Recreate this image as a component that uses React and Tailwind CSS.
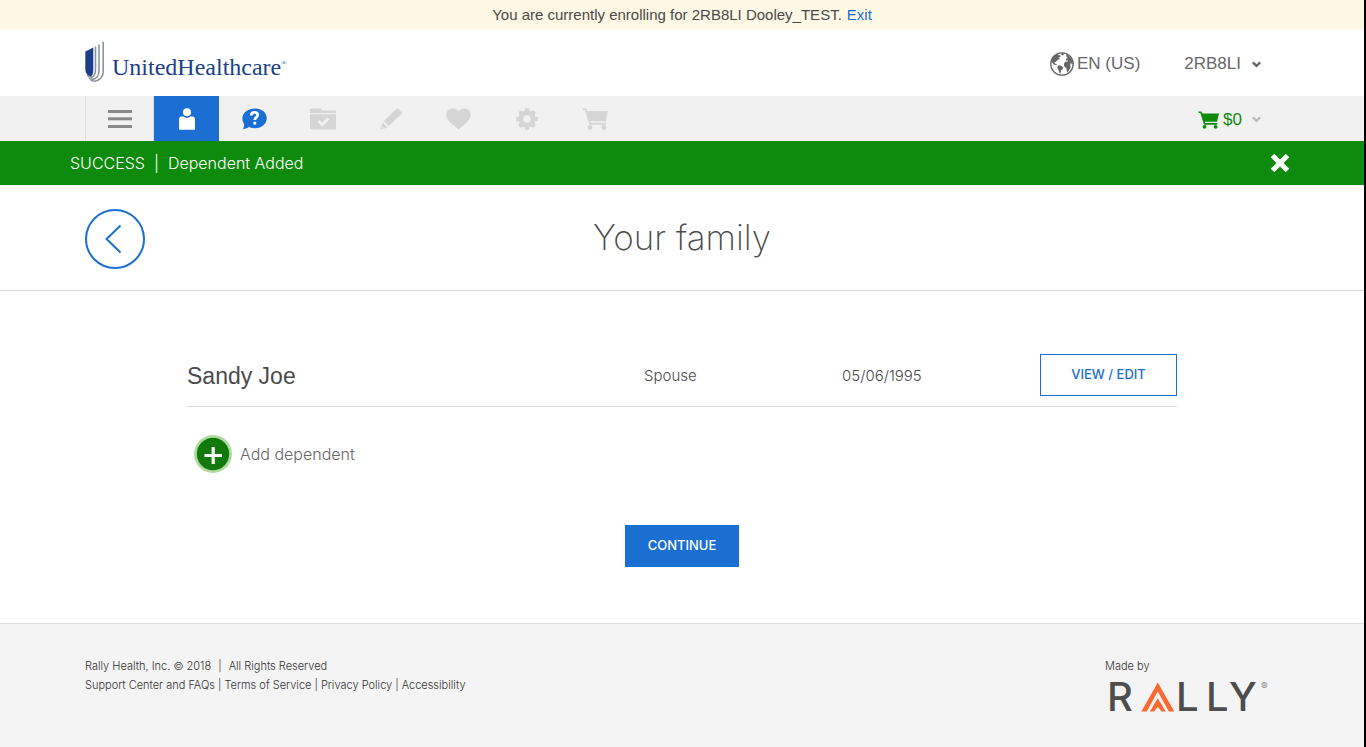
import React from "react";

const light = "font-[Inter,'Liberation_Sans',sans-serif] font-light";

function Bars() {
  return (
    <svg width="24" height="20" viewBox="0 0 24 20" fill="currentColor" aria-hidden="true">
      <rect y="1" width="24" height="3" />
      <rect y="8.3" width="24" height="3" />
      <rect y="16" width="24" height="3" />
    </svg>
  );
}

function Person() {
  return (
    <svg width="16" height="22" viewBox="0 0 16 22" fill="currentColor" aria-hidden="true">
      <circle cx="8" cy="4.2" r="4" />
      <path d="M3 8.500h1.500a5.600 5.600 0 0 0 7 0H13a3 3 0 0 1 3 3V21a.7.7 0 0 1-.7.7H.7A.7.7 0 0 1 0 21v-9.500a3 3 0 0 1 3-3z" />
    </svg>
  );
}

function Help() {
  return (
    <svg width="25" height="22" viewBox="0 0 25 22" aria-hidden="true">
      <path d="M13 .5C20 .5 24.700 4.800 24.700 10.300S20 20.300 13 20.300c-2.300 0-4.300-.4-6-1.200-1.300.9-3.300 1.700-6 2.200.8-1.500 1.200-3.200 1.200-5C1 14.600.4 12.600.4 10.300.4 4.800 6 .5 13 .5z" fill="currentColor" />
      <path d="M9.300 7.500c0-2 1.300-3.100 3.200-3.100s3.200 1 3.200 2.700c0 2.300-2.900 2.300-2.900 4.900" fill="none" stroke="#fff" strokeWidth="2.700" />
      <rect x="11.400" y="13.800" width="2.800" height="2.700" fill="#fff" />
    </svg>
  );
}

function Folder() {
  return (
    <svg width="26" height="22" viewBox="0 0 26 22" aria-hidden="true">
      <path d="M1 .5h9.500l2 2H25a1 1 0 0 1 1 1V5H0V1.500a1 1 0 0 1 1-1zM0 6.200h26v14.300a1 1 0 0 1-1 1H1a1 1 0 0 1-1-1z" fill="currentColor" />
      <path d="M8.600 13l3.700 3.700 6-6.200" fill="none" stroke="#f1f1f1" strokeWidth="3" />
    </svg>
  );
}

function Pencil() {
  return (
    <svg width="22" height="22" viewBox="0 0 22 22" fill="currentColor" aria-hidden="true">
      <path d="M17.700.5l4.100 4.100a.6.6 0 0 1 0 .8L8.700 18.300l-5-5L16.800.5a.6.6 0 0 1 .9 0zM2.600 14.500l4.900 4.900L.3 21.700z" />
      <circle cx="2.400" cy="19.700" r=".8" fill="#f1f1f1" />
    </svg>
  );
}

function Heart() {
  return (
    <svg width="25" height="22" viewBox="0 0 25 22" fill="currentColor" aria-hidden="true">
      <path d="M12.500 21.500C9.500 18 .3 13.500.3 7 .3 3 3.200.4 6.700.4c2.500 0 4.800 1.300 5.800 3.100C13.500 1.700 15.800.4 18.300.4c3.500 0 6.400 2.600 6.400 6.600 0 6.500-9.200 11-12.200 14.500z" />
    </svg>
  );
}

function Gear() {
  return (
    <svg width="22" height="22" viewBox="0 0 22 22" aria-hidden="true">
      <g fill="currentColor">
        <circle cx="11" cy="11" r="8.500" />
        {[0, 45, 90, 135].map((a) => (
          <rect key={a} x="8.800" y=".3" width="4.400" height="21.400" rx="1" transform={`rotate(${a} 11 11)`} />
        ))}
      </g>
      <circle cx="11" cy="11" r="3.800" fill="#f1f1f1" />
    </svg>
  );
}

function Cart({ className }) {
  return (
    <svg className={className} viewBox="0 0 26 22" fill="currentColor" aria-hidden="true">
      <path d="M0 .5h4.300l1.100 2.500H26l-2.400 10.300H8.500l.5 1.500h14.800v2H7.500L2.900 2.300H1z" />
      <circle cx="8" cy="19.500" r="2.400" />
      <circle cx="21.800" cy="19.500" r="2.400" />
    </svg>
  );
}

function Caret() {
  return (
    <svg width="9" height="7" viewBox="0 0 9 7" fill="none" stroke="currentColor" strokeWidth="2.400" aria-hidden="true">
      <path d="M.8 1.300l3.700 3.500 3.700-3.500" />
    </svg>
  );
}

function Globe() {
  return (
    <svg width="24" height="24" viewBox="0 0 24 24" aria-hidden="true">
      <circle cx="12" cy="12" r="11.200" fill="none" stroke="currentColor" strokeWidth="1.300" />
      <path
        fill="currentColor"
        d="M1.500 8.500C2.600 5.400 4.600 3.300 7.500 2l1.500 1.200 1.700.3-.4 1.500-1.700.5 1.200 1.500-2.200.8-1.400 2-1.700.2.600 1.800 2 .8-.3.700-3-.8L1.800 9.900zM8 13.600l2-.3 3.300 2-.7 2-1.500 1-.5 2.700-1 .4-1-3.200-1.400-2.600zM10.500 1.800l3-.6.5 1.400-1.800 1zM15.800 4l1-1.500C20 4.300 22.500 7.500 23 11.400l-1.100 1.200-1.100-2-.6 2.500.4 2-1.900 3.900-1.500 1.200-1-4.200-2-1.500-.3-2.800 1.500-2 2.500-.3-.2-1.100-2.100.3.800-2 1.500-.7z"
      />
    </svg>
  );
}

function Shield() {
  return (
    <svg width="20" height="41" viewBox="0 0 20 41" aria-hidden="true">
      <path d="M.3 10.500L8.300 6.500V29c0 3.500-1 5.800-2.600 6.700C2 34.500.3 31.500.3 27.500z" fill="#1b3f8b" />
      <g fill="none" stroke="#8b949e" strokeWidth="1.600">
        <path d="M10.500 5.500V29c0 4-1.800 6.700-4.300 7.300-1.300 0-2.800-.8-3.800-2" />
        <path d="M14 3.500V30c0 4.700-2.800 7.900-6.300 8.400-1.200 0-2.700-.5-3.700-1.600" />
        <path d="M18.200.8V30.500c0 5.600-3.700 9.300-8.700 9.700-1.600 0-3-.5-4-1.300" />
      </g>
    </svg>
  );
}

function Rally() {
  return (
    <svg width="166" height="50" viewBox="-4 -8 166 50" role="img" aria-label="Rally">
      <g fill="#4d4d4d" className="font-[Inter,sans-serif] text-[40px] font-medium">
        <text x="-2" y="31">R</text>
        <text x="67" y="31">L</text>
        <text x="97" y="31">L</text>
        <text x="120" y="31">Y</text>
      </g>
      <g fill="#f96a32">
        <path d="M48.800 2.500L65.300 31.500h-5.500L48.800 11.500 37.800 31.500h-5.500z" />
        <path d="M48.800 18.300L56.800 31.500h-4.300l-3.700-4.500-3.700 4.500h-4.300z" />
      </g>
      <text x="152" y="10" fill="#8a8a8a" className="font-[Inter,sans-serif] text-[10px] font-normal">®</text>
    </svg>
  );
}

const steps = [
  { label: "Help", icon: <Help />, tone: "text-[#1b6fd3]" },
  { label: "Benefits", icon: <Folder />, tone: "text-[#d5d5d5]" },
  { label: "Edit", icon: <Pencil />, tone: "text-[#d5d5d5]" },
  { label: "Favorites", icon: <Heart />, tone: "text-[#d5d5d5]" },
  { label: "Settings", icon: <Gear />, tone: "text-[#d5d5d5]" },
  { label: "Checkout", icon: <Cart className="h-[22px] w-[26px]" />, tone: "text-[#d5d5d5]" },
];

const dependents = [{ name: "Sandy Joe", relation: "Spouse", born: "05/06/1995" }];

const shell = "mx-auto w-full max-w-[1224px] px-[15px]";

export default function App() {
  return (
    <div className="flex min-h-screen flex-col border-r-2 border-black bg-white font-['Liberation_Sans',Arial,sans-serif] text-[#4a4a4a]">
      <div className="flex h-[30px] items-center justify-center gap-[5px] bg-[#fdf7e3] text-[15px]">
        <span>You are currently enrolling for 2RB8LI Dooley_TEST.</span>
        <a href="#exit" className="text-[#1b6fd3]">Exit</a>
      </div>

      <header className={`${shell} flex h-[66px] items-center justify-between`}>
        <a href="#home" className="flex items-center gap-[7px] pb-1 font-['Liberation_Serif',serif] text-[24px] text-[#1b3f8b]">
          <Shield />
          <span className="flex items-start pt-3 leading-7">
            UnitedHealthcare<span className="text-[7px] leading-5">®</span>
          </span>
        </a>
        <div className="flex items-center gap-11 pt-[2px] pr-[18px] text-[17px] text-[#666]">
          <button type="button" className="flex items-center gap-[3px]">
            <Globe />
            EN (US)
          </button>
          <button type="button" className="flex items-center gap-[11px]">
            2RB8LI
            <Caret />
          </button>
        </div>
      </header>

      <div className="bg-[#f1f1f1]">
        <div className={`${shell} flex h-[45px] justify-between`}>
          <nav className="flex gap-[3px]">
            <div className="-mr-[3px] flex border-x border-[#ddd]">
              <button type="button" aria-label="Menu" className="flex w-[67px] items-center justify-center text-[#888]">
                <Bars />
              </button>
            </div>
            <button type="button" aria-label="Profile" className="flex w-[65px] items-center justify-center bg-[#1b6fd3] text-white">
              <Person />
            </button>
            {steps.map((s) => (
              <button key={s.label} type="button" aria-label={s.label} className={`flex w-[65px] items-center justify-center ${s.tone}`}>
                {s.icon}
              </button>
            ))}
          </nav>
          <button type="button" className="flex items-center gap-1 pt-[2px] pr-[18px] text-[17px] text-[#108a0c]">
            <Cart className="h-[18px] w-[21px]" />
            $0
            <span className="pl-[6px] text-[#bbb]">
              <Caret />
            </span>
          </button>
        </div>
      </div>

      <div role="status" className="bg-[#0e8a0c] text-white">
        <div className={`mx-auto flex h-11 w-full max-w-[1224px] items-center justify-between pr-1 text-[16px] ${light}`}>
          <p>SUCCESS&nbsp; |&nbsp; Dependent Added</p>
          <button type="button" aria-label="Close">
            <svg width="20" height="20" viewBox="0 0 20 20" stroke="currentColor" strokeWidth="5" fill="none" aria-hidden="true">
              <path d="M2.500 2.500l15 15M17.500 2.500l-15 15" />
            </svg>
          </button>
        </div>
      </div>

      <div className="border-b border-[#d5d5d5]">
        <div className={`${shell} grid h-[105px] grid-cols-[60px_1fr_60px] items-center`}>
          <button type="button" aria-label="Back" className="mt-[2px] flex size-[60px] items-center justify-center rounded-full border-2 border-[#1b6fd3] text-[#1b6fd3]">
            <svg width="20" height="30" viewBox="0 0 20 30" fill="none" stroke="currentColor" strokeWidth="2" aria-hidden="true">
              <path d="M15.500 1.500L1.500 15l14 13.500" />
            </svg>
          </button>
          <h1 className="text-center font-[Inter,sans-serif] text-[35px] font-extralight">Your family</h1>
        </div>
      </div>

      <main className="mx-auto w-full max-w-[990px] pt-[53px] pb-14">
        <table aria-label="Dependents" className="w-full border-collapse text-left">
          <tbody>
            {dependents.map((d) => (
              <tr key={d.name} className="h-[62px] border-b border-[#ddd]">
                <th scope="row" className="pt-[3px] text-[23px] font-normal">{d.name}</th>
                <td className={`w-[198px] pt-[3px] text-[15px] ${light}`}>{d.relation}</td>
                <td className={`w-[198px] pt-[3px] text-[15px] ${light}`}>{d.born}</td>
                <td className="w-[137px]">
                  <button type="button" className="h-[42px] w-full border border-[#1b6fd3] font-[Inter,sans-serif] text-[13px] font-medium text-[#1b6fd3]">
                    VIEW / EDIT
                  </button>
                </td>
              </tr>
            ))}
          </tbody>
        </table>
        <button type="button" className={`mt-7 ml-[7px] flex items-center gap-2 text-[16px] text-[#666] ${light}`}>
          <svg width="38" height="38" viewBox="0 0 38 38" aria-hidden="true">
            <circle cx="19" cy="19" r="19" fill="#b0dba0" />
            <circle cx="19" cy="19" r="16.200" fill="#127a0c" />
            <path d="M10.500 20.500H28M19.200 12V29" stroke="#fff" strokeWidth="3.200" />
          </svg>
          Add dependent
        </button>
        <button type="button" className="mx-auto mt-[52px] block h-[42px] w-[114px] bg-[#1b6fd3] font-[Inter,sans-serif] text-[13px] font-medium text-white">
          CONTINUE
        </button>
      </main>

      <footer className="grow border-t border-[#ddd] bg-[#f4f4f4] pt-[33px]">
        <div className={`${shell} flex justify-between text-[11px] leading-[19px] text-[#333] ${light}`}>
          <div>
            <p className="flex gap-[7px]">
              <span>Rally Health, Inc. © 2018</span>
              <span>|</span>
              <span>All Rights Reserved</span>
            </p>
            <p className="flex gap-[3px]">
              <a href="#support">Support Center and FAQs</a>
              <span>|</span>
              <a href="#terms">Terms of Service</a>
              <span>|</span>
              <a href="#privacy">Privacy Policy</a>
              <span>|</span>
              <a href="#accessibility">Accessibility</a>
            </p>
          </div>
          <div className="pr-2">
            <p>Made by</p>
            <div className="-mt-1">
              <Rally />
            </div>
          </div>
        </div>
      </footer>
    </div>
  );
}
